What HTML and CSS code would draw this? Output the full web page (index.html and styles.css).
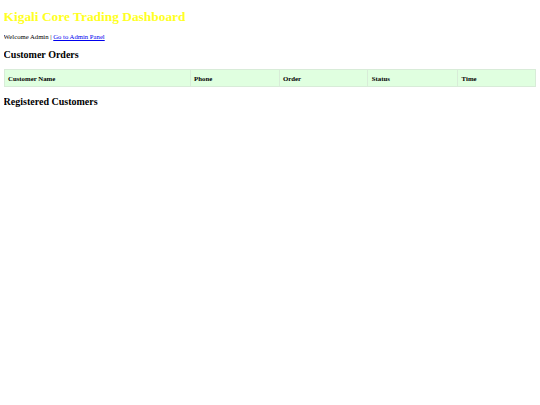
FILE: index.html
```html
<!DOCTYPE html>
<html>
<head>
<meta charset="utf-8">
<title>Kigali Core Trading Dashboard</title>
<link rel="stylesheet" href="styles.css">
</head>
<body>
<h1 class="title">Kigali Core Trading Dashboard</h1>
<p class="welcome">Welcome Admin | <a href="#" class="admin-link">Go to Admin Panel</a></p>
<h2 class="section">Customer Orders</h2>
<table class="orders">
<thead>
<tr>
<th class="c-name">Customer Name</th>
<th class="c-phone">Phone</th>
<th class="c-order">Order</th>
<th class="c-status">Status</th>
<th class="c-time">Time</th>
</tr>
</thead>
<tbody></tbody>
</table>
<h2 class="section">Registered Customers</h2>
</body>
</html>
```
FILE: styles.css
```css
html, body {
  background: #ffffff;
}
body {
  margin: 3.6px;
  font-family: "Liberation Serif", "Times New Roman", serif;
  font-size: 6.7px;
  color: #000;
}
.title {
  font-size: 13.4px;
  font-weight: bold;
  color: #ffff22;
  margin: 5.5px 0 8px;
}
.welcome {
  margin: 6.7px 0;
}
.admin-link {
  color: #0000ee;
}
.section {
  font-size: 10px;
  font-weight: bold;
  margin: 9.2px 0 8.6px;
}
.orders {
  width: 100%;
  border-collapse: collapse;
}
.orders th {
  background: #e0ffe0;
  border: 1px solid #d8ecd8;
  text-align: left;
  padding: 4.7px 3.4px;
  font-size: 6.8px;
  font-weight: bold;
}
.c-name { width: 35%; }
.c-phone { width: 16.7%; }
.c-order { width: 16.7%; }
.c-status { width: 16.9%; }
.c-time { width: 14.7%; }
```
